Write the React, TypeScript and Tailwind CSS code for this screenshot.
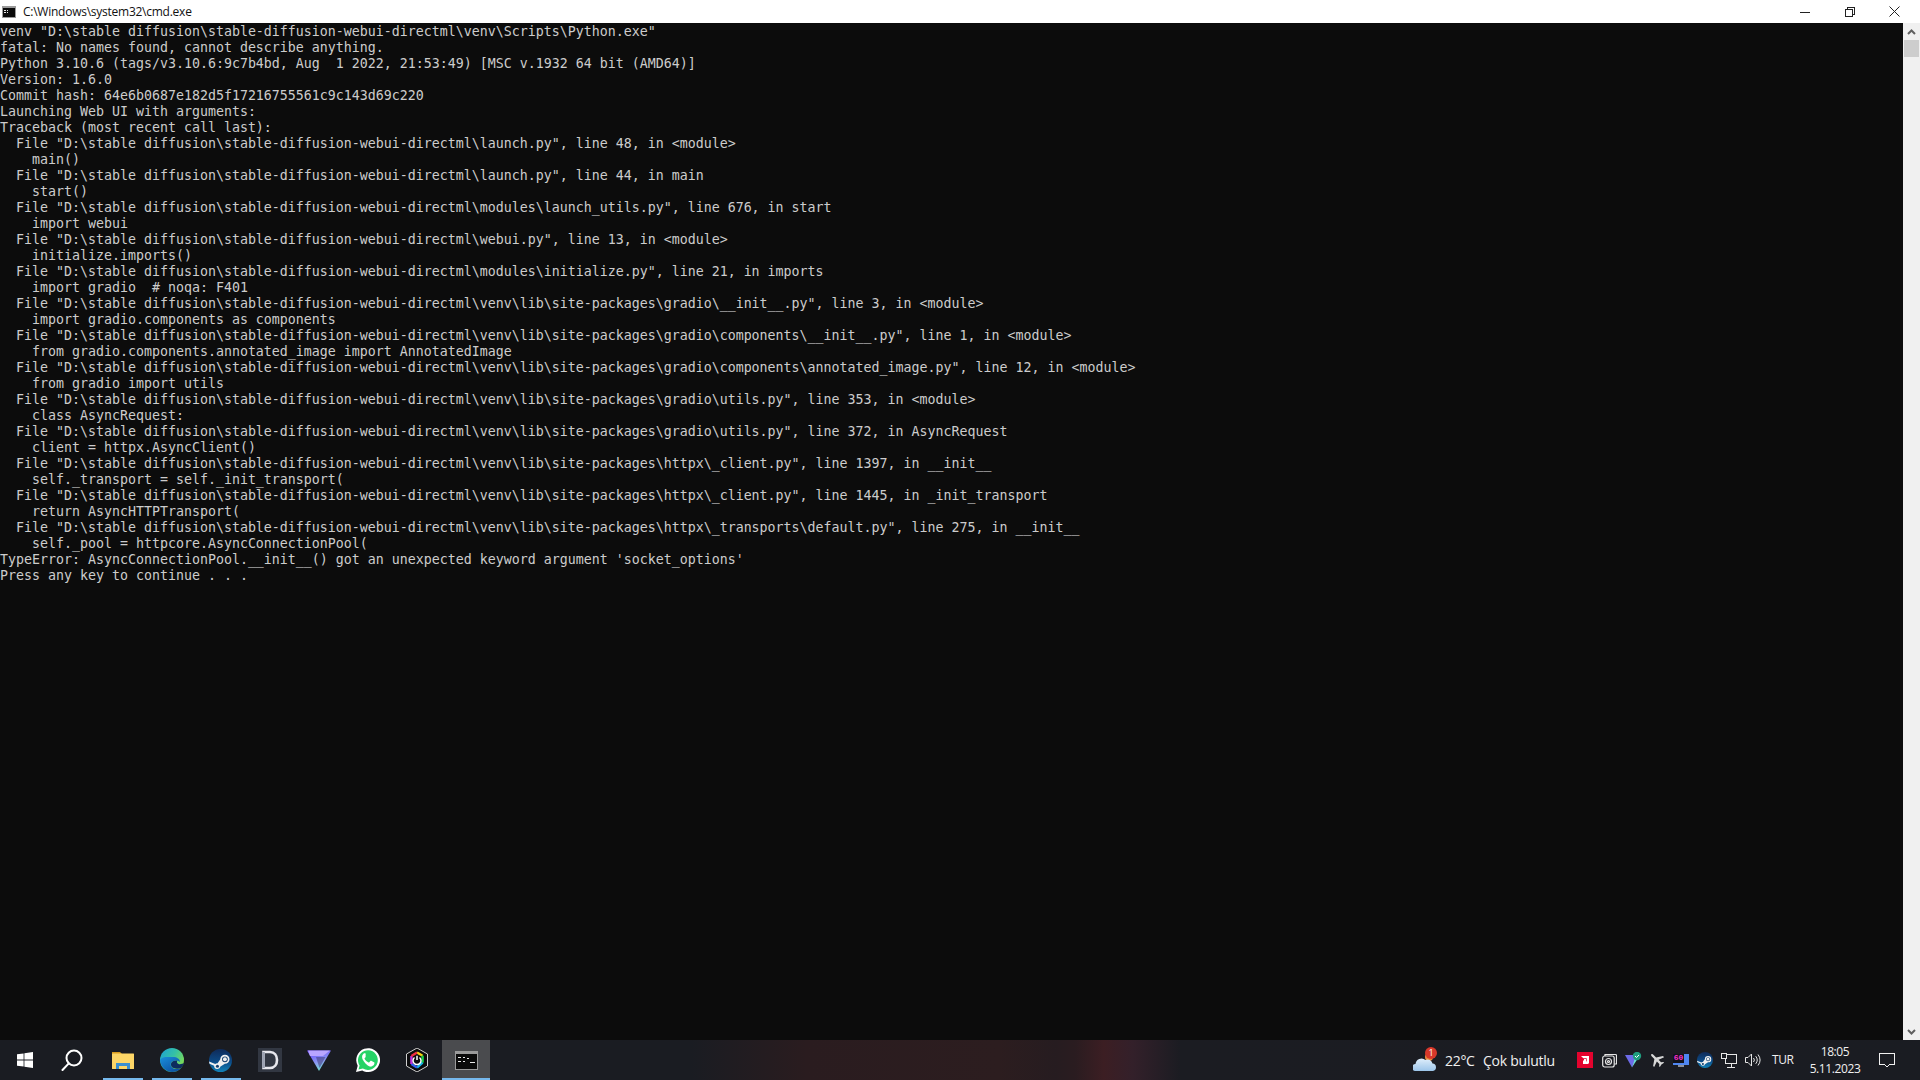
const consoleLines = [
  'venv "D:\\stable diffusion\\stable-diffusion-webui-directml\\venv\\Scripts\\Python.exe"',
  'fatal: No names found, cannot describe anything.',
  'Python 3.10.6 (tags/v3.10.6:9c7b4bd, Aug  1 2022, 21:53:49) [MSC v.1932 64 bit (AMD64)]',
  'Version: 1.6.0',
  'Commit hash: 64e6b0687e182d5f17216755561c9c143d69c220',
  'Launching Web UI with arguments:',
  'Traceback (most recent call last):',
  '  File "D:\\stable diffusion\\stable-diffusion-webui-directml\\launch.py", line 48, in <module>',
  '    main()',
  '  File "D:\\stable diffusion\\stable-diffusion-webui-directml\\launch.py", line 44, in main',
  '    start()',
  '  File "D:\\stable diffusion\\stable-diffusion-webui-directml\\modules\\launch_utils.py", line 676, in start',
  '    import webui',
  '  File "D:\\stable diffusion\\stable-diffusion-webui-directml\\webui.py", line 13, in <module>',
  '    initialize.imports()',
  '  File "D:\\stable diffusion\\stable-diffusion-webui-directml\\modules\\initialize.py", line 21, in imports',
  '    import gradio  # noqa: F401',
  '  File "D:\\stable diffusion\\stable-diffusion-webui-directml\\venv\\lib\\site-packages\\gradio\\__init__.py", line 3, in <module>',
  '    import gradio.components as components',
  '  File "D:\\stable diffusion\\stable-diffusion-webui-directml\\venv\\lib\\site-packages\\gradio\\components\\__init__.py", line 1, in <module>',
  '    from gradio.components.annotated_image import AnnotatedImage',
  '  File "D:\\stable diffusion\\stable-diffusion-webui-directml\\venv\\lib\\site-packages\\gradio\\components\\annotated_image.py", line 12, in <module>',
  '    from gradio import utils',
  '  File "D:\\stable diffusion\\stable-diffusion-webui-directml\\venv\\lib\\site-packages\\gradio\\utils.py", line 353, in <module>',
  '    class AsyncRequest:',
  '  File "D:\\stable diffusion\\stable-diffusion-webui-directml\\venv\\lib\\site-packages\\gradio\\utils.py", line 372, in AsyncRequest',
  '    client = httpx.AsyncClient()',
  '  File "D:\\stable diffusion\\stable-diffusion-webui-directml\\venv\\lib\\site-packages\\httpx\\_client.py", line 1397, in __init__',
  '    self._transport = self._init_transport(',
  '  File "D:\\stable diffusion\\stable-diffusion-webui-directml\\venv\\lib\\site-packages\\httpx\\_client.py", line 1445, in _init_transport',
  '    return AsyncHTTPTransport(',
  '  File "D:\\stable diffusion\\stable-diffusion-webui-directml\\venv\\lib\\site-packages\\httpx\\_transports\\default.py", line 275, in __init__',
  '    self._pool = httpcore.AsyncConnectionPool(',
  "TypeError: AsyncConnectionPool.__init__() got an unexpected keyword argument 'socket_options'",
  'Press any key to continue . . .',
];

function CmdIcon({ w = 14, h = 12 }: { w?: number; h?: number }) {
  return (
    <svg width={w} height={h} viewBox="0 0 22 18" shapeRendering="crispEdges">
      <rect width="22" height="18" fill="#9a9a9a" />
      <rect x="1" y="3" width="20" height="14" fill="#0a0a0a" />
      <path d="M3 6h3v1H3zM3 9h3v1H3zM8 6h2v1H8zM8 9h2v1H8zM11 7h2v1h-2zM14 10h5v1h-5z" fill="#e8e8e8" />
    </svg>
  );
}

function WindowButtons() {
  return (
    <div className="flex items-center h-full mr-[3px]">
      <div className="w-[45px] flex justify-center">
        <svg width="10" height="10" viewBox="0 0 10 10" shapeRendering="crispEdges"><path d="M0 5h10v1H0z" fill="#222" /></svg>
      </div>
      <div className="w-[45px] flex justify-center">
        <svg width="10" height="10" viewBox="0 0 10 10" fill="none" stroke="#222" shapeRendering="crispEdges"><rect x="0.5" y="2.5" width="7" height="7" /><path d="M2.5 2.5v-2h7v7h-2" /></svg>
      </div>
      <div className="w-[45px] flex justify-center">
        <svg width="11" height="11" viewBox="0 0 11 11" fill="none" stroke="#222"><path d="M0.5 0.5l10 10M10.5 0.5l-10 10" /></svg>
      </div>
    </div>
  );
}

function Scrollbar() {
  return (
    <div className="w-[17px] shrink-0 bg-[#f0f0f0] flex flex-col px-px">
      <div className="h-[17px] flex items-center justify-center">
        <svg width="9" height="6" viewBox="0 0 9 6" fill="none" stroke="#606060" strokeWidth="2"><path d="M1 5l3.500-3.500L8 5" /></svg>
      </div>
      <div className="h-[17px] bg-[#cdcdcd]" />
      <div className="flex-1" />
      <div className="h-[17px] flex items-center justify-center">
        <svg width="9" height="6" viewBox="0 0 9 6" fill="none" stroke="#606060" strokeWidth="2"><path d="M1 1l3.500 3.500L8 1" /></svg>
      </div>
    </div>
  );
}

function WinLogo() {
  return (
    <svg width="16" height="16" viewBox="0 0 16 16" fill="#fff"><path d="M0 2.300l6.600-.9v6.200H0zM7.400 1.300L16 0v7.600H7.400zM0 8.400h6.600v6.200L0 13.700zM7.400 8.400H16V16l-8.600-1.300z" /></svg>
  );
}

function SearchIcon() {
  return (
    <svg width="22" height="22" viewBox="0 0 22 22" fill="none" stroke="#fff" strokeWidth="2" className="mr-[3px]"><circle cx="13" cy="9" r="7.500" /><path d="M7.800 14.400L1.500 21" strokeLinecap="round" /></svg>
  );
}

function FolderIcon() {
  return (
    <svg width="22" height="19" viewBox="0 0 22 19">
      <path d="M0 1h8l2 2H0z" fill="#d99c1f" />
      <rect y="2.500" width="22" height="15.500" fill="#fdd667" rx="0.5" />
      <path d="M4 18v-6h14v6h-3v-3H7v3z" fill="#3a8fd0" />
    </svg>
  );
}

function EdgeIcon() {
  return (
    <svg width="24" height="24" viewBox="0 0 24 24">
      <defs>
        <linearGradient id="edgeTop" x1="0" y1="0" x2="1" y2="0.6"><stop offset="0" stopColor="#1ba0d8" /><stop offset="0.55" stopColor="#35c1a5" /><stop offset="1" stopColor="#7fdc52" /></linearGradient>
        <linearGradient id="edgeLow" x1="0" y1="0" x2="0.8" y2="1"><stop offset="0" stopColor="#1a8fdc" /><stop offset="1" stopColor="#0c4f9e" /></linearGradient>
      </defs>
      <circle cx="12" cy="12" r="12" fill="url(#edgeTop)" />
      <path d="M0 12C1 20 7 24 12 24c4 0 7-1.500 9-4-4 2-8 1-9.500-1-1.500-2-1-5 1.500-6 3-1 6-.5 7 1 0-3-3-5-7-5C8 9 2 8 0 12z" fill="url(#edgeLow)" />
      <path d="M13.500 13c-2.500.8-3.200 3.500-2 5.500 1.500 2 5.500 3 9.500 1.500 1.500-1.500 2.500-3 3-5-1.500 1-4 1.500-5.500 1-1.800-.6-2-2.500-1-3.500-1.500 0-3 .2-4 .5z" fill="#0d2c5e" />
    </svg>
  );
}

function SteamIcon({ size = 23, id = 'steamBg' }: { size?: number; id?: string }) {
  return (
    <svg width={size} height={size} viewBox="0 0 24 24">
      <defs>
        <linearGradient id={id} x1="0" y1="0" x2="0" y2="1"><stop offset="0" stopColor="#0f2a58" /><stop offset="0.55" stopColor="#0c4a86" /><stop offset="1" stopColor="#1283b8" /></linearGradient>
      </defs>
      <circle cx="12" cy="12" r="12" fill={`url(#${id})`} />
      <path d="M0 13l6.500 2.700c.6-.5 1.500-.8 2.300-.7l3-4.300a4.800 4.800 0 114.800 4.800L12 18.200a3.400 3.400 0 01-6.700-.8L.5 15.500z" fill="#f0f0f0" />
      <circle cx="16.600" cy="10.700" r="3" fill="#14406f" />
      <circle cx="16.600" cy="10.700" r="2" fill="#f0f0f0" />
      <circle cx="8.800" cy="18" r="1.600" fill="#14406f" />
    </svg>
  );
}

function DIcon() {
  return (
    <svg width="24" height="24" viewBox="0 0 24 24">
      <rect width="24" height="24" fill="#323742" />
      <path d="M5.500 4h6.500c4.500 0 7 3.300 7 8s-2.500 8-7 8H5.500z" fill="none" stroke="#e8e8ee" strokeWidth="2.600" />
      <path d="M5.500 4v16" stroke="#9aa0b0" strokeWidth="2.600" />
    </svg>
  );
}

function ProtonIcon() {
  return (
    <svg width="24" height="24" viewBox="0 0 24 24">
      <defs>
        <linearGradient id="vpnMain" x1="0.2" y1="0" x2="0.6" y2="1"><stop offset="0" stopColor="#6d4aff" /><stop offset="0.6" stopColor="#8c9cf0" /><stop offset="1" stopColor="#6fe3d0" /></linearGradient>
      </defs>
      <path d="M0 2.500h24L12 23z" fill="url(#vpnMain)" />
      <path d="M1 2.500h22L16 8H3z" fill="#b9a6ff" />
      <path d="M9 9h9.500L12.500 20z" fill="#3e3a78" opacity="0.55" />
    </svg>
  );
}

function WhatsAppIcon() {
  return (
    <svg width="24" height="24" viewBox="0 0 24 24">
      <path d="M0 24l1.700-6.200A11.900 11.900 0 1112 24c-2 0-4-.5-5.700-1.500z" fill="#fff" />
      <path d="M2.500 21.500l1.100-4A9.900 9.900 0 1112 22c-1.800 0-3.600-.5-5.100-1.400z" fill="#25d366" />
      <path d="M8.600 6.500c-.3 0-.8.100-1.200.6-.4.500-1.500 1.400-1.500 3.500s1.500 4.100 1.800 4.400c.2.300 3 4.700 7.300 6-.2 0 3.300-.6 3.800-2.300.5-1.100.5-2 .3-2.200-.1-.2-.4-.3-.9-.6l-2.500-1.200c-.4-.1-.6-.2-.9.200l-1.100 1.400c-.2.200-.4.300-.8.100-1.800-.8-3.400-2.200-4.300-3.900-.2-.4 0-.6.200-.8l.8-1c.2-.2.200-.4.100-.7L9.800 7.200c-.3-.7-.6-.7-.9-.7z" fill="#fff" transform="translate(0.6,-0.8) scale(0.93)" />
    </svg>
  );
}

function IcueIcon() {
  return (
    <svg width="22" height="24" viewBox="0 0 22 24">
      <path d="M11 0l10.500 6v12L11 24 .5 18V6z" fill="#0c0c0e" stroke="#d0d0d0" strokeWidth="1" />
      <path d="M11 4.500L16.600 7.700" stroke="#f6d010" strokeWidth="2.400" fill="none" />
      <path d="M16.600 7.700v7" stroke="#16d04a" strokeWidth="2.400" fill="none" />
      <path d="M16.600 14.700L11 19.500" stroke="#18b8e8" strokeWidth="2.400" fill="none" />
      <path d="M11 19.500L5.400 16" stroke="#3060f0" strokeWidth="2.400" fill="none" />
      <path d="M5.400 16V8" stroke="#c030e0" strokeWidth="2.400" fill="none" />
      <path d="M5.400 8L11 4.500" stroke="#f03040" strokeWidth="2.400" fill="none" />
      <path d="M8.500 9.500a4 4 0 105 0M11 7.800V12" stroke="#fff" strokeWidth="1.500" fill="none" />
    </svg>
  );
}

function TaskIcon({ active, running, children }: { active?: boolean; running?: boolean; children: React.ReactNode }) {
  return (
    <div className={`relative h-full flex items-center justify-center ${active ? 'ml-px w-[48px] bg-[#4a4b4e]' : 'w-[49px]'}`}>
      {children}
      {running && (
        <div className={`absolute bottom-0 h-[2px] bg-[#76b9ed] ${active ? 'left-0 right-0' : 'left-[5px] right-1'}`} />
      )}
    </div>
  );
}

function TrayCell({ children }: { children: React.ReactNode }) {
  return <div className="w-[24px] h-full flex items-center justify-center">{children}</div>;
}

function TrayIcons() {
  return (
    <div className="flex items-center h-full">
      <TrayCell>
        <svg width="16" height="16" viewBox="0 0 16 16">
          <rect width="16" height="16" fill="#e4032e" />
          <path d="M4 4h8v8l-2.300-2.300V6.300H6.300zM7 7h2v2l2 2v1H6V9l1-1z" fill="#fff" />
        </svg>
      </TrayCell>
      <TrayCell>
        <svg width="15" height="15" viewBox="0 0 15 15" fill="none" stroke="#e6e6e6" strokeWidth="1.200">
          <rect x="0.700" y="3" width="11.500" height="11" rx="2" />
          <path d="M3 3V1.500h10.500a1 1 0 011 1V11H12.500" />
          <circle cx="6.500" cy="8.500" r="3" />
          <circle cx="6.500" cy="8.500" r="1" />
        </svg>
      </TrayCell>
      <TrayCell>
        <svg width="17" height="16" viewBox="0 0 17 16">
          <path d="M0 3h13l-6 12.500z" fill="#6d6be8" />
          <path d="M7 15.500L10 6h3z" fill="#6fe3d0" />
          <circle cx="12" cy="4" r="4.200" fill="#1f9e7f" />
          <path d="M10 4l1.500 1.500 2.500-2.500" stroke="#fff" fill="none" strokeWidth="1" />
        </svg>
      </TrayCell>
      <TrayCell>
        <svg width="16" height="16" viewBox="0 0 16 16">
          <path d="M8 0c.8 0 1.200 1 1.200 2v3.500L15 9.500V11L9.200 9v3.500L11 14v1l-3-.8L5 15v-1l1.800-1.500V9L1 11V9.500l5.800-4V2C6.800 1 7.200 0 8 0z" fill="#d8d8d8" transform="rotate(-45 8 8)" />
        </svg>
      </TrayCell>
      <TrayCell>
        <div className="flex flex-col items-center">
          <div className="relative w-[16px] h-[11px] bg-[#4f86f0]">
            <div className="absolute left-0 top-0 w-[11px] h-[9px] bg-[#12121a] flex items-center justify-center text-[8px] leading-none font-bold text-[#ff2fd0] [font-family:'Liberation_Mono',monospace]">60</div>
          </div>
          <div className="w-[6px] h-[2px] bg-[#8a8f9a]" />
        </div>
      </TrayCell>
      <TrayCell><SteamIcon size={16} id="steamTray" /></TrayCell>
      <TrayCell>
        <svg width="16" height="15" viewBox="0 0 16 15" fill="none" stroke="#e6e6e6" shapeRendering="crispEdges">
          <rect x="4.500" y="1.500" width="11" height="9" />
          <rect x="0.500" y="0.500" width="5" height="5" fill="#1a1c22" />
          <path d="M10 11v3M6 14.500h8" />
        </svg>
      </TrayCell>
      <TrayCell>
        <svg width="16" height="14" viewBox="0 0 16 14" fill="none" stroke="#e6e6e6">
          <path d="M0.500 4.500h2.500L6.500 1v12L3 9.500H.5z" />
          <path d="M8.500 5a3 3 0 010 4M10.700 3.200a6 6 0 010 7.600M13 1.500a9 9 0 010 11" />
        </svg>
      </TrayCell>
    </div>
  );
}

export default function App() {
  return (
    <div className="w-[1920px] h-[1080px] flex flex-col overflow-hidden bg-[#0c0c0c] [font-family:'Open_Sans','Noto_Sans',sans-serif]">
      <div className="h-[23px] shrink-0 bg-white flex items-center justify-between">
        <div className="flex items-center pl-[2px] gap-[7px] text-[12px] tracking-[-0.25px] text-[#111]">
          <CmdIcon />
          <span>C:\Windows\system32\cmd.exe</span>
        </div>
        <WindowButtons />
      </div>
      <div className="flex-1 min-h-0 flex">
        <pre className="flex-1 pt-px text-[13.29px] leading-[16px] text-[#cccccc] [font-family:'DejaVu_Sans_Mono','Liberation_Mono',monospace]">
          {consoleLines.join('\n')}
        </pre>
        <Scrollbar />
      </div>
      <div className="h-[40px] shrink-0 flex items-center bg-[linear-gradient(90deg,#1a1c22_0%,#1a1c22_36%,#2a1c1f_42%,#2c1d1f_52%,#261c20_55%,#2a1c20_56%,#3c1e23_57.500%,#33202a_59%,#1b1c22_61.500%,#1a1c22_100%)]">
        <TaskIcon><WinLogo /></TaskIcon>
        <TaskIcon><SearchIcon /></TaskIcon>
        <TaskIcon running><FolderIcon /></TaskIcon>
        <TaskIcon running><EdgeIcon /></TaskIcon>
        <TaskIcon running><SteamIcon /></TaskIcon>
        <TaskIcon><DIcon /></TaskIcon>
        <TaskIcon><ProtonIcon /></TaskIcon>
        <TaskIcon><WhatsAppIcon /></TaskIcon>
        <TaskIcon><IcueIcon /></TaskIcon>
        <TaskIcon active running><CmdIcon w={23} h={19} /></TaskIcon>
        <div className="flex-1" />
        <div className="flex items-center h-full text-[#f0f0f0]">
          <div className="relative w-[24px] h-[22px] mr-[8px]">
            <svg width="24" height="22" viewBox="0 0 24 22">
              <defs>
                <linearGradient id="cloud" x1="0" y1="0" x2="0" y2="1"><stop offset="0" stopColor="#dfeefb" /><stop offset="1" stopColor="#9cc5ea" /></linearGradient>
              </defs>
              <circle cx="16" cy="8" r="4" fill="#e8873a" />
              <path d="M3 22a3.500 3.500 0 01-.5-7 6 6 0 0110-4 5 5 0 017 3.500A3.800 3.800 0 0120 22z" fill="url(#cloud)" />
            </svg>
            <div className="absolute -top-[2px] right-0 w-[12px] h-[12px] rounded-full bg-[#d8382a] text-white text-[9px] leading-[12px] text-center">1</div>
          </div>
          <span className="w-[29px] text-[14px] tracking-[-0.3px] whitespace-nowrap">22°C</span>
          <span className="w-[71px] text-[14px] tracking-[-0.25px] whitespace-nowrap ml-[9px]">Çok bulutlu</span>
          <div className="h-full ml-[19px]"><TrayIcons /></div>
          <span className="w-[21px] text-[12px] ml-[7px] tracking-[-0.4px]">TUR</span>
          <div className="ml-[18px] w-[48px] flex flex-col items-center text-[12px] leading-[17px] tracking-[-0.4px]">
            <span>18:05</span>
            <span>5.11.2023</span>
          </div>
          <div className="ml-[20px] w-[16px] mr-[25px]">
            <svg width="16" height="15" viewBox="0 0 16 15" fill="none" stroke="#f0f0f0" shapeRendering="crispEdges">
              <path d="M.5.500h15v11h-5l-2.500 2.500-2.500-2.500h-5z" />
            </svg>
          </div>
        </div>
      </div>
    </div>
  );
}
